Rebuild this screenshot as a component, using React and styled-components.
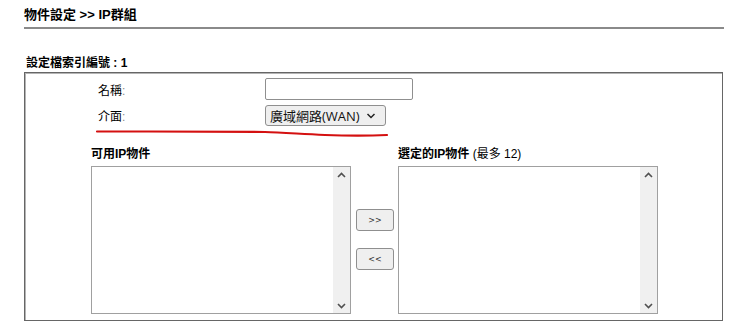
import React from "react";
import styled, { createGlobalStyle } from "styled-components";

const GlobalStyle = createGlobalStyle`
  body {
    margin: 0;
    background: #ffffff;
    font-family: "Liberation Sans", Arial, "Noto Sans CJK TC", sans-serif;
    color: #000000;
  }
`;

const Page = styled.div`
  width: 700px;
  padding: 7px 0 0 24px;
`;

const Title = styled.div`
  font-size: 13px;
  font-weight: bold;
  line-height: 16px;
  padding-bottom: 4px;
  border-bottom: 2px solid #8a8a8a;
`;

const SubTitle = styled.div`
  margin-top: 26px;
  padding-left: 2px;
  font-size: 12px;
  font-weight: bold;
  line-height: 16px;
`;

const Box = styled.div`
  position: relative;
  width: 697px;
  height: 242px;
  margin-top: 1px;
  border: 1px solid #666666;
  box-shadow: inset 1px 1px 0 #b4b4b4;
  padding: 5px 0 0 0;
  box-sizing: content-box;
`;

const FormRow = styled.div`
  display: grid;
  grid-template-columns: 167px auto;
  align-items: center;
  padding-left: 73px;
  height: ${(p) => p.$h}px;
  margin-bottom: ${(p) => p.$mb || 0}px;
`;

const Label = styled.div`
  font-size: 12px;
  span {
    color: #888;
  }
`;

const TextInput = styled.input`
  width: 148px;
  height: 22px;
  box-sizing: border-box;
  border: 1px solid #8f8f8f;
  border-radius: 2px;
  background: #fff;
  margin: 0;
`;

const Select = styled.div`
  display: flex;
  align-items: center;
  gap: 6px;
  width: 121px;
  height: 21px;
  box-sizing: border-box;
  padding: 0 0 0 4px;
  border: 1px solid #8f8f8f;
  border-radius: 3px;
  background: #efefef;
  font-size: 13px;
  font-family: "Open Sans", "Noto Sans CJK TC", sans-serif;
  color: #111;
`;

const Annotation = styled.svg`
  position: absolute;
  left: 70px;
  top: 55px;
  pointer-events: none;
`;

const Lists = styled.div`
  display: flex;
  align-items: flex-start;
  padding-left: 66px;
  margin-top: 20px;
`;

const Column = styled.div`
  display: flex;
  flex-direction: column;
  width: 260px;
`;

const Heading = styled.div`
  font-size: 12px;
  font-weight: bold;
  line-height: 16px;
  height: 20px;
  span {
    font-weight: normal;
  }
`;

const ListBox = styled.div`
  display: flex;
  height: 148px;
  border: 1px solid #a0a0a0;
  box-sizing: border-box;
  background: #fff;
`;

const ListArea = styled.div`
  flex: 1;
`;

const ScrollBar = styled.div`
  width: 17px;
  background: #f0f0f0;
  display: flex;
  flex-direction: column;
  justify-content: space-between;
  align-items: center;
  padding: 5px 0 4px;
`;

const Buttons = styled.div`
  display: flex;
  flex-direction: column;
  gap: 17px;
  margin: 63px 4px 0 5px;
`;

const MoveButton = styled.button`
  width: 38px;
  height: 22px;
  border: 1px solid #8f8f8f;
  border-radius: 3px;
  background: #efefef;
  font-size: 8px;
  color: #333;
  padding: 0;
  font-family: "DejaVu Sans", sans-serif;
`;

const Chevron = ({ up }) => (
  <svg width="9" height="6" viewBox="0 0 9 6">
    <path
      d={up ? "M1 5 L4.5 1.5 L8 5" : "M1 1 L4.5 4.5 L8 1"}
      fill="none"
      stroke="#505050"
      strokeWidth="1.6"
    />
  </svg>
);

const Scrolled = () => (
  <ListBox>
    <ListArea />
    <ScrollBar>
      <Chevron up />
      <Chevron />
    </ScrollBar>
  </ListBox>
);

export default function App() {
  return (
    <Page>
      <GlobalStyle />
      <Title>物件設定 &gt;&gt; IP群組</Title>
      <SubTitle>設定檔索引編號 : 1</SubTitle>
      <Box>
        <FormRow $h={22} $mb={5}>
          <Label>
            名稱<span>:</span>
          </Label>
          <TextInput />
        </FormRow>
        <FormRow $h={21}>
          <Label>
            介面<span>:</span>
          </Label>
          <Select>
            廣域網路(WAN)
            <svg width="10" height="6" viewBox="0 0 10 6">
              <path d="M1.5 1 L5 4.5 L8.5 1" fill="none" stroke="#222" strokeWidth="1.5" />
            </svg>
          </Select>
        </FormRow>
        <Annotation width="300" height="12" viewBox="0 0 300 12">
          <path
            d="M2 3.5 C60 3.5 130 3.5 170 4 C185 4.5 200 5.5 230 7 C260 8 280 7.5 292 7"
            fill="none"
            stroke="#d41010"
            strokeWidth="2.2"
            strokeLinecap="round"
          />
        </Annotation>
        <Lists>
          <Column>
            <Heading>可用IP物件</Heading>
            <Scrolled />
          </Column>
          <Buttons>
            <MoveButton>&gt;&gt;</MoveButton>
            <MoveButton>&lt;&lt;</MoveButton>
          </Buttons>
          <Column>
            <Heading>
              選定的IP物件 <span>(最多 12)</span>
            </Heading>
            <Scrolled />
          </Column>
        </Lists>
      </Box>
    </Page>
  );
}
